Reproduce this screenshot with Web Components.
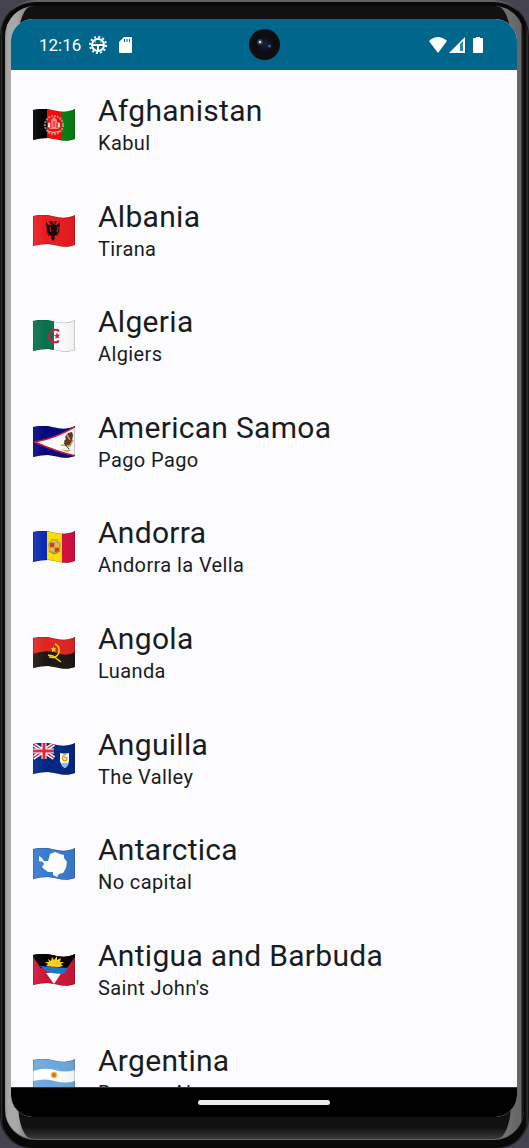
<!DOCTYPE html>
<html lang="en">
<head>
<meta charset="utf-8">
<meta name="viewport" content="width=device-width, initial-scale=1">
<title>Countries</title>
<style>
html, body { height: 100%; margin: 0; background: #44434f; }
body { font-family: Roboto, "Liberation Sans", sans-serif; color: #191c1e; }
</style>
</head>
<body>
<phone-frame>
  <status-bar slot="status" time="12:16"></status-bar>
  <country-list>
    <country-row flag="af" name="Afghanistan" capital="Kabul"></country-row>
    <country-row flag="al" name="Albania" capital="Tirana"></country-row>
    <country-row flag="dz" name="Algeria" capital="Algiers"></country-row>
    <country-row flag="as" name="American Samoa" capital="Pago Pago"></country-row>
    <country-row flag="ad" name="Andorra" capital="Andorra la Vella"></country-row>
    <country-row flag="ao" name="Angola" capital="Luanda"></country-row>
    <country-row flag="ai" name="Anguilla" capital="The Valley"></country-row>
    <country-row flag="aq" name="Antarctica" capital="No capital"></country-row>
    <country-row flag="ag" name="Antigua and Barbuda" capital="Saint John's"></country-row>
    <country-row flag="ar" name="Argentina" capital="Buenos Aires"></country-row>
  </country-list>
  <nav-bar slot="nav"></nav-bar>
</phone-frame>

<script>
const define = (tag, render) => customElements.define(tag, class extends HTMLElement {
  connectedCallback() {
    if (!this.shadowRoot) this.attachShadow({ mode: 'open' }).innerHTML = render(this);
  }
});

/* Artwork for each flag, on a 42 x 32 canvas, clipped to the waving outline. */
const FLAGS = {
  af: `<path fill="#000" d="M0 0h14v32H0z"/><path fill="#f50a0a" d="M14 0h14v32H14z"/><path fill="#087c12" d="M28 0h14v32H28z"/>
    <circle cx="21" cy="16" r="9" fill="none" stroke="#e9b9a9" stroke-width="2" stroke-dasharray="2 1" opacity=".65"/>
    <path fill="#f6d6d0" d="M15 18l1-5 2 1v-3l3-3 3 3v3l2-1 1 5-2 2H17z" opacity=".6"/><path stroke="#f20c0c" fill="none" d="M18 19v-5M21 18v-6M24 19v-5"/>
    <path stroke="#fff" stroke-width="1.5" d="M16 14v4M26 14v4"/><path stroke="#f3c7c0" fill="none" d="M15 22q6 3 12 0"/>`,
  al: `<path fill="#ea1a20" d="M0 0h42v32H0z"/>
    <path fill="#170506" d="M21 9l-2-3-3 0 1 2 1 2-2 0-3-3v3l1 1-1 1 2 1-2 1 2 1-2 1 2 1-2 2 3-1-1 3 2-1 2 2-1 1 2 3 2-3-1-1 2-2 2 1-1-3 3 1-2-2 2-1-2-1 2-1-2-1 2-1-1-1 1-1V7l-3 3-2 0 1-2 1-2h-3z"/>
    <path stroke="#ea1a20" d="M17 12l1 5M25 12l-1 5M21 6v3"/>`,
  dz: `<path fill="#08714a" d="M0 0h21v32H0z"/><path fill="#fff" d="M21 0h21v32H21z"/>
    <path fill="none" stroke="#d8133f" stroke-width="2.200" d="M26 11a6.200 6.200 0 1 0 0 10"/><path fill="#d8133f" d="M24 12.500l.9 2.300 2.600-.2-2 1.600 1 2.300-2.200-1.100-1.800 1.600.2-2.500-2.300-1 2.500-.6z"/>`,
  as: `<path fill="#07077f" d="M0 0h42v32H0z"/><path fill="#fff" stroke="#cf1739" stroke-width="1.500" d="M2 16Q24 12 43 0V30Q24 26 2 16z"/>
    <path fill="#63371d" d="M35 7l4-1 1 3-1 6-3 5-4-1-1-4 2-2-1-2z"/><path stroke="#c5a25a" stroke-width="1.500" fill="none" d="M28 19l9 1 3-6M30 24q3 2 7 0M34 9l3 5"/><path stroke="#2d2521" d="M31 17l5 6"/>`,
  ad: `<path fill="#0929b2" d="M0 0h14v32H0z"/><path fill="#fbdc00" d="M14 0h15v32H14z"/><path fill="#d60e40" d="M29 0h13v32H29z"/>
    <path fill="#c5a054" d="M17 10l4 1 5-1 2 3-1 7-4 3-2 0-5-3-1-7z"/><path fill="#d23b29" d="M17 12h4v4h-4zM22 17h4v3l-3 1h-1z"/><path fill="#e9bd2e" d="M22 12h4v4h-4zM17 17h4v4l-4-2z"/><path stroke="#9d804b" fill="none" d="M16 20l5 3 6-3M18 9h7"/>`,
  ao: `<path fill="#df2522" d="M0 0h42v18H0z"/><path fill="#1d1513" d="M0 17Q14 12 24 16T42 15V32H0z"/>
    <path stroke="#f8d40a" stroke-width="1.500" fill="none" d="M22 7q5 2 4 8-2 7-10 5M15 18l5 1 8 6"/><path fill="#f8d40a" d="M20 9l1 2h2l-1 2 1 2-2-1-2 1v-2l-1-2h2z"/>`,
  ai: `<path fill="#012782" d="M0 0h42v32H0z"/><path stroke="#fff" stroke-width="4" d="M0 1l21 14M21 1L0 15"/><path stroke="#dc2942" stroke-width="1.500" d="M0 1l21 14M21 1L0 15"/>
    <path stroke="#fff" stroke-width="5" d="M11 0v16M0 8h21"/><path stroke="#dc2942" stroke-width="3" d="M11 0v16M0 8h21"/>
    <path fill="#fff" d="M27 10q5 1 9 0v8q-1 5-4 7-4-2-5-7z"/><path fill="#8bc4ea" d="M28 20h8q-1 3-4 5-3-1-4-5z"/><path fill="none" stroke="#efa01c" stroke-width="1.500" d="M33 11q-5 2-3 6 4 2 4-2l-3-1"/>`,
  aq: `<path fill="#387bcf" d="M0 0h42v32H0z"/>
    <path fill="#fff" d="M6 8l3 2 2 3 4 0 1-3 1-4 5-2 5 2 4 1 0 3 3 4-1 6-3 5-4 1-2 3-4-2 0-3-5 0-4-3-2-2 2-3-1-2-4-1z"/>`,
  ag: `<path fill="#ce1435" d="M0 0h42v32H0z"/><path fill="#000" d="M0 3L0 0H42V3L34 14H8z"/><path fill="#fff" d="M13 19l16-1L21 30z"/><path fill="#1776cd" d="M7 12q14 1 28 2l-4 6q-9 0-17-2z"/>
    <path fill="#fcd021" d="M13 12l2-2-3-2 4 0-1-3 3 2 1-4 2 3 3-4v4l4-2-1 4 4 0-3 2 2 2-4 1q-6 0-13-1z"/>`,
  ar: `<path fill="#6ca9df" d="M0 0h42v32H0z"/><path fill="#fff" d="M0 12q12-4 22-1t20 0v11q-10 3-20 0t-22 0z"/>
    <circle cx="21" cy="16" r="3" fill="#e28b14" stroke="#efc36b"/><circle cx="21" cy="16" r="1" fill="#a8631c"/>`
};
const WAVE = 'M0 1Q8-1 15 0 C24 2 32 5 42 0V30C32 34 24 30 15 29Q8 29 0 31z';

define('country-flag', el => `
<style>:host { display: block; width: 42px; height: 32px; } svg { display: block; }</style>
<svg width="42" height="32" viewBox="0 0 42 32" aria-hidden="true">
  <defs><clipPath id="wave"><path d="${WAVE}"/></clipPath>
  <linearGradient id="shade"><stop offset="0" stop-color="#fff" stop-opacity=".08"/><stop offset=".3" stop-color="#fff" stop-opacity="0"/><stop offset="1" stop-color="#000" stop-opacity=".06"/></linearGradient></defs>
  <g clip-path="url(#wave)">${FLAGS[el.getAttribute('code')]}<path d="${WAVE}" fill="url(#shade)" stroke="#111" stroke-opacity=".35"/></g>
</svg>`);

define('country-row', el => `
<style>
:host { display: flex; align-items: flex-start; padding: 23px 22px 0; box-sizing: border-box; }
.entry { display: flex; align-items: center; gap: 23px; min-width: 0; }
.text { min-width: 0; }
h2, p { margin: 0; font-weight: 400; white-space: nowrap; }
h2 { font-size: 30px; line-height: 36px; letter-spacing: 0.01em; }
p { font-size: 20px; line-height: 28px; letter-spacing: 0.02em; }
</style>
<div class="entry">
  <country-flag code="${el.getAttribute('flag')}"></country-flag>
  <div class="text"><h2>${el.getAttribute('name')}</h2><p>${el.getAttribute('capital')}</p></div>
</div>`);

define('country-list', () => `
<style>:host { display: grid; grid-auto-rows: 1fr; min-height: 1056px; }</style>
<slot></slot>`);

define('status-bar', el => `
<style>
:host { display: grid; grid-template-columns: 1fr auto 1fr; align-items: center; padding: 10px 34px 10px 28px; background: #00668b; color: #fff; }
.side { display: flex; align-items: center; }
.left { gap: 8px; }
.right { justify-content: flex-end; gap: 2px; }
time { font-size: 17px; line-height: 20px; }
.card { margin-left: 4px; }
.battery { margin-left: 6px; }
svg { display: block; }
.camera { margin-left: 6px; }
</style>
<div class="side left">
  <time>${el.getAttribute('time')}</time>
  <svg width="18" height="18" viewBox="0 0 18 18" fill="none" stroke="#fff"><circle cx="9" cy="9" r="6" stroke-width="2"/><circle cx="9" cy="9" r="8" stroke-width="2" stroke-dasharray="2 2.190"/><path stroke-width="2" d="M3 9h12M9 9v6"/><path d="M6 6h1M11 6h1"/></svg>
  <svg class="card" width="13" height="16" viewBox="0 0 13 16"><path fill="#fff" d="M5 0h7q1 0 1 1v14q0 1-1 1H1q-1 0-1-1V5z"/><path stroke="#00668b" d="M5.500 2v3M8 2v3M10.500 2v3"/></svg>
</div>
<svg class="camera" width="31" height="31" viewBox="0 0 31 31" aria-hidden="true">
  <defs><radialGradient id="lens" cx=".5" cy=".5" r=".5"><stop offset="0" stop-color="#1b2138"/><stop offset=".6" stop-color="#111425"/><stop offset="1" stop-color="#0d0d11"/></radialGradient></defs>
  <circle cx="15.500" cy="15.500" r="15.500" fill="#0e0e10"/><circle cx="16" cy="15.500" r="8.500" fill="url(#lens)"/>
  <circle cx="11" cy="13" r="3" fill="#536087" opacity=".5"/><circle cx="11" cy="13" r="1.300" fill="#d7e2ee"/><circle cx="20.500" cy="17" r="1.500" fill="#2d6aa0"/>
</svg>
<div class="side right">
  <svg width="18" height="16" viewBox="0 0 18 16"><path fill="#fff" d="M0 4Q9-4 18 4L9 16z"/></svg>
  <svg width="16" height="16" viewBox="0 0 16 16"><path fill="#fff" d="M0 16L16 0v16z"/><path fill="#00668b" d="M11 7l3-3v10h-3z" opacity=".8"/></svg>
  <svg class="battery" width="10" height="16" viewBox="0 0 10 16"><path fill="#fff" d="M3 0h4v1h2q1 0 1 1v13q0 1-1 1H1q-1 0-1-1V2q0-1 1-1h2z"/></svg>
</div>`);

define('nav-bar', () => `
<style>
:host { display: flex; align-items: center; justify-content: center; height: 30px; background: #000; border-top: 1px solid #333; box-sizing: border-box; }
button { width: 132px; height: 5px; padding: 0; border: 0; border-radius: 3px; background: #ebebeb; }
</style>
<button type="button" aria-label="Home"></button>`);

define('phone-frame', () => `
<style>
:host { display: block; height: 100vh; }
.edge { height: 100%; box-sizing: border-box; padding: 2px 1px 0; border-radius: 36px 36px 30px 30px; background: linear-gradient(#666, #454545 8px, #151515 12px 97%, #333 99%, #1c1c1c); overflow: hidden; }
.rim { height: 100%; box-sizing: border-box; padding: 4px 4px 8px; border-radius: 34px 34px 32px 32px; background: linear-gradient(90deg, #333, #080808 2px 50%, #080808 calc(100% - 3px), #333); }
.glass { position: relative; height: 100%; box-sizing: border-box; padding: 13px 7px 22px 6px; border-radius: 30px; border-bottom: 1px solid #626262; overflow: hidden;
  background: linear-gradient(90deg, #8f8f8f, #a8a8a8 3px 12px, #777 24px, #777 calc(100% - 24px), #666 calc(100% - 7px) calc(100% - 3px), #161616 calc(100% - 2px)); }
/* The black face lies under the screen and tapers towards the corners. */
.glass::before { content: ""; position: absolute; inset: 0 13px; border-radius: 14px / 36px; background: linear-gradient(#111 calc(100% - 12px), #3a3a3a); }
.screen { position: relative; display: flex; flex-direction: column; height: 100%; border-radius: 22px; overflow: hidden; background: #fcfcff; }
main { flex: 1; min-height: 0; overflow: hidden; }
</style>
<div class="edge"><div class="rim"><div class="glass"><div class="screen">
  <slot name="status"></slot>
  <main><slot></slot></main>
  <slot name="nav"></slot>
</div></div></div></div>`);
</script>
</body>
</html>
